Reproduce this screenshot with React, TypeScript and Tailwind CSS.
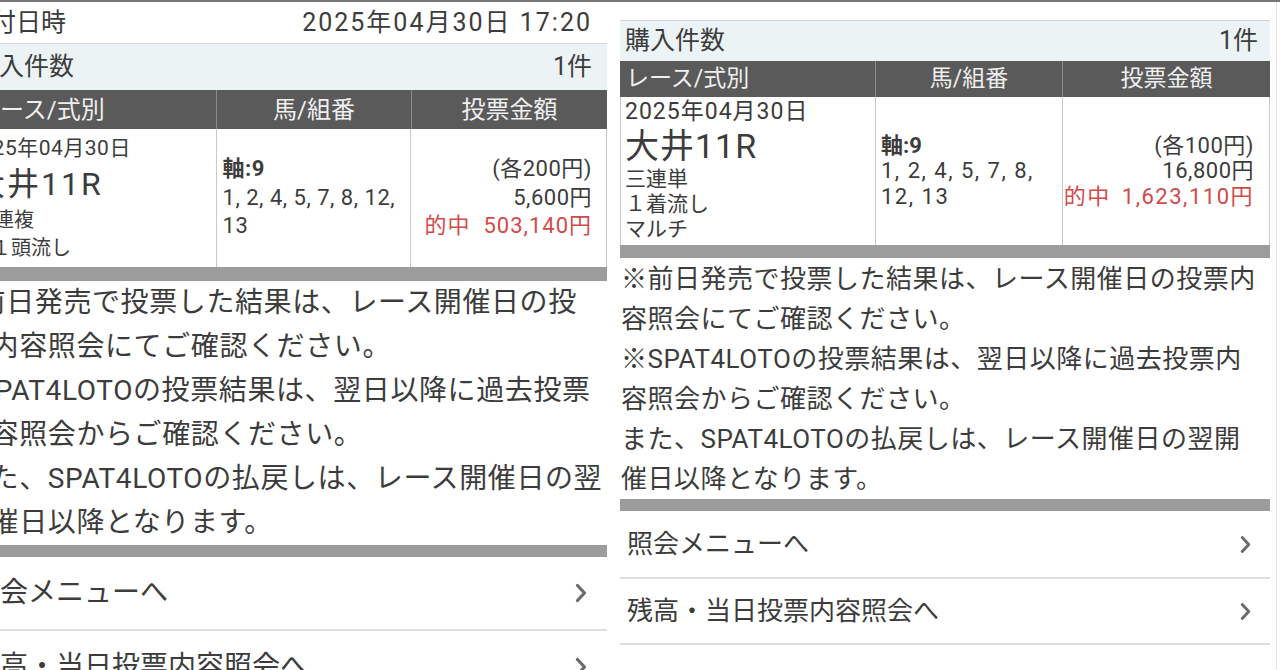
import React from "react";

function Chevron({ className }: { className?: string }) {
  return (
    <svg viewBox="0 0 14 22" className={className}>
      <path d="M3.5 3.5 L10.5 11 L3.5 18.5" fill="none" stroke="#6b6b6b" strokeWidth="3.2" strokeLinecap="round" strokeLinejoin="round" />
    </svg>
  );
}

function LeftPanel() {
  return (
    <div className="w-[607px] shrink-0 overflow-hidden">
      <div className="-ml-[32px] w-[639px]">
        <div className="flex h-[42px] items-center justify-between border-b border-[#d6d6d6] pl-[4px] pr-[15px] text-[25px]">
          <span className="-ml-[6px]">受付日時</span>
          <span className="tracking-[2px]">2025年04月30日 17:20</span>
        </div>
        <div className="flex h-[46px] items-center justify-between bg-[#ecf3f5] pl-[6px] pr-[15px] text-[25px]">
          <span>購入件数</span>
          <span>1件</span>
        </div>
        <div className="flex h-[39px] bg-[#5a5a5a] text-[24px] text-[#efefef]">
          <div className="flex w-[248px] items-center pl-[8px]">レース/式別</div>
          <div className="flex w-[195px] items-center justify-center border-l border-[#8a8a8a]">馬/組番</div>
          <div className="flex w-[196px] items-center justify-center border-l border-[#8a8a8a]">投票金額</div>
        </div>
        <div className="flex h-[138px] border-r border-[#c8c8c8]">
          <div className="w-[248px] pl-[14px] pt-[5px]">
            <div className="-ml-[14px] text-[21px] leading-[28px] tracking-[0.5px]">2025年04月30日</div>
            <div className="-ml-[9px] text-[32px] leading-[44px] tracking-[2px]">大井11R</div>
            <div className="-ml-[8px] text-[20px] leading-[28px]">三連複</div>
            <div className="ml-[9px] text-[20px] leading-[28px]">１頭流し</div>
          </div>
          <div className="flex w-[195px] flex-col justify-center border-l border-[#c8c8c8] pl-[6px] text-[22px] leading-[28.5px] tracking-[0.5px]">
            <div className="font-bold">軸:9</div>
            <div>1, 2, 4, 5, 7, 8, 12,</div>
            <div>13</div>
          </div>
          <div className="flex w-[196px] flex-col items-end justify-center border-l border-[#c8c8c8] pr-[14px] text-[22px] leading-[28.5px] tracking-[0.5px]">
            <div>(各200円)</div>
            <div>5,600円</div>
            <div className="text-[#d24a4a] tracking-[1px]">
              的中<span className="ml-[13px]">503,140円</span>
            </div>
          </div>
        </div>
        <div className="h-[14px] bg-[#9c9c9c]" />
        <div className="-ml-[6px] text-[28px] leading-[44px] tracking-[0.6px] whitespace-nowrap">
          <div className="-ml-[13px]">※前日発売で投票した結果は、レース開催日の投</div>
          <div>票内容照会にてご確認ください。</div>
          <div className="-ml-[13px]">※SPAT4LOTOの投票結果は、翌日以降に過去投票</div>
          <div>内容照会からご確認ください。</div>
          <div>また、SPAT4LOTOの払戻しは、レース開催日の翌</div>
          <div>開催日以降となります。</div>
        </div>
        <div className="h-[12px] bg-[#9c9c9c]" />
        <div className="flex h-[74px] items-center justify-between border-b-2 border-[#dedede] pl-[4px] pr-[19px] text-[28px]">
          <span>照会メニューへ</span>
          <Chevron className="h-[22px] w-[14px]" />
        </div>
        <div className="flex h-[74px] items-center justify-between border-b-2 border-[#dedede] pl-[4px] pr-[19px] text-[28px]">
          <span>残高・当日投票内容照会へ</span>
          <Chevron className="h-[22px] w-[14px]" />
        </div>
      </div>
    </div>
  );
}

function RightPanel() {
  return (
    <div className="w-[650px] shrink-0">
      <div className="h-[19px] border-b border-[#d6d6d6]" />
      <div className="flex h-[40px] items-center justify-between bg-[#ecf3f5] pl-[5px] pr-[12px] text-[25px]">
        <span>購入件数</span>
        <span>1件</span>
      </div>
      <div className="flex h-[36px] bg-[#5a5a5a] text-[23px] text-[#efefef]">
        <div className="flex w-[255px] items-center pl-[6px]">レース/式別</div>
        <div className="flex w-[187px] items-center justify-center border-l border-[#8a8a8a]">馬/組番</div>
        <div className="flex w-[208px] items-center justify-center border-l border-[#8a8a8a]">投票金額</div>
      </div>
      <div className="flex h-[148px] border-x border-[#c8c8c8]">
        <div className="w-[254px] pl-[4px] pt-[2px]">
          <div className="text-[23px] leading-[26px] tracking-[1px]">2025年04月30日</div>
          <div className="text-[34px] leading-[42px] tracking-[1px]">大井11R</div>
          <div className="text-[21px] leading-[25px]">三連単</div>
          <div className="text-[21px] leading-[25px]">１着流し</div>
          <div className="text-[21px] leading-[25px]">マルチ</div>
        </div>
        <div className="flex w-[187px] flex-col justify-center border-l border-[#c8c8c8] pl-[5px] text-[22px] leading-[25.5px] tracking-[1.5px]">
          <div className="font-bold tracking-normal">軸:9</div>
          <div>1, 2, 4, 5, 7, 8,</div>
          <div>12, 13</div>
        </div>
        <div className="flex w-[207px] flex-col items-end justify-center border-l border-[#c8c8c8] pr-[15px] text-[22px] leading-[25.5px] tracking-[0.5px]">
          <div>(各100円)</div>
          <div>16,800円</div>
          <div className="text-[#d24a4a] tracking-[1.5px]">
            的中<span className="ml-[11px]">1,623,110円</span>
          </div>
        </div>
      </div>
      <div className="h-[13px] bg-[#9c9c9c]" />
      <div className="pt-[1px] pl-[1px] text-[26px] leading-[40px] tracking-[0.5px] whitespace-nowrap">
        <div>※前日発売で投票した結果は、レース開催日の投票内</div>
        <div>容照会にてご確認ください。</div>
        <div>※SPAT4LOTOの投票結果は、翌日以降に過去投票内</div>
        <div>容照会からご確認ください。</div>
        <div>また、SPAT4LOTOの払戻しは、レース開催日の翌開</div>
        <div>催日以降となります。</div>
      </div>
      <div className="h-[12px] bg-[#9c9c9c]" />
      <div className="flex h-[68px] items-center justify-between border-b-2 border-[#dedede] pl-[7px] pr-[18px] text-[26px]">
        <span>照会メニューへ</span>
        <Chevron className="h-[21px] w-[13px]" />
      </div>
      <div className="flex h-[66px] items-center justify-between border-b-2 border-[#dedede] pl-[7px] pr-[18px] text-[26px]">
        <span>残高・当日投票内容照会へ</span>
        <Chevron className="h-[21px] w-[13px]" />
      </div>
    </div>
  );
}

export default function App() {
  return (
    <div className="flex h-[670px] w-[1280px] overflow-hidden border-t-2 border-[#777777] bg-white font-['Roboto','Noto_Sans_CJK_JP',sans-serif] text-[#3c3c3c]">
      <LeftPanel />
      <div className="w-[13px] shrink-0" />
      <RightPanel />
      <div className="w-[10px] shrink-0">
        <div className="ml-[6px] h-full w-px bg-[#e2e2e2]" />
      </div>
    </div>
  );
}
